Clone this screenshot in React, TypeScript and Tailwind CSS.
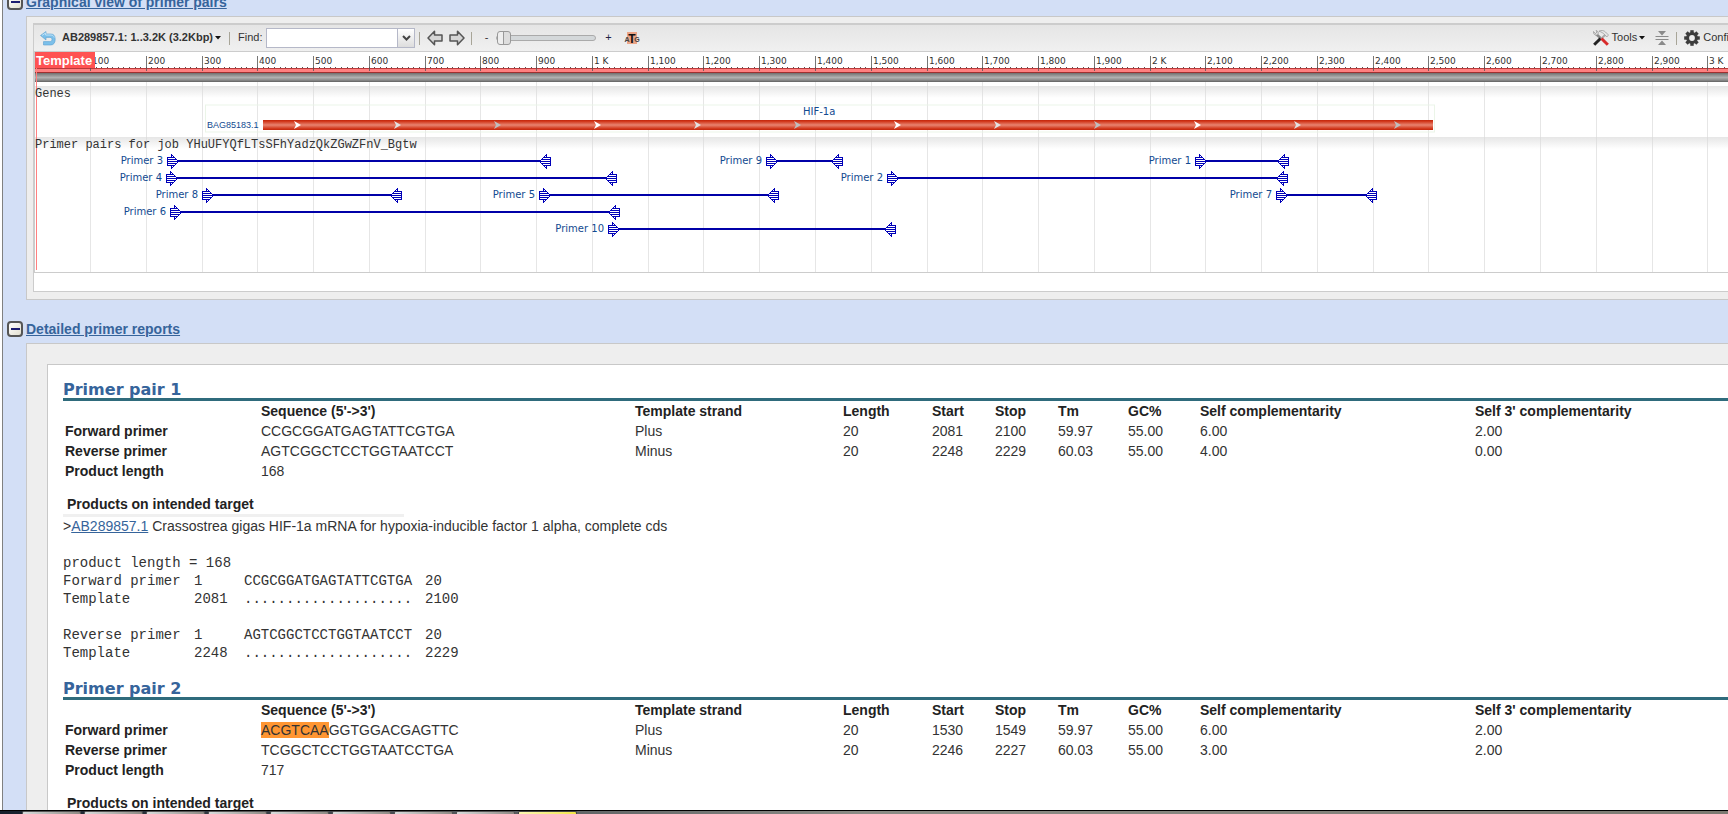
import type { ReactNode } from 'react';

const CHART_WIDTH = 1800;
const STEP = 55.77;
const at = (base: number) => Math.floor((base * STEP) / 100 - 0.3) + 0.5;

const tickLabel = (base: number) =>
  base % 1000 === 0 ? `${base / 1000} K` : base > 1000 ? `${Math.floor(base / 1000)},${String(base % 1000).padStart(3, '0')}` : String(base);

const ticks = Array.from({ length: 31 }, (_, i) => (i + 1) * 100);
const minorTicks = Array.from({ length: 310 }, (_, i) => (i + 1) * 10);

const primerSpans = [
  { name: 'Primer 3', from: 132, to: 516, row: 0 },
  { name: 'Primer 9', from: 731, to: 808, row: 0 },
  { name: 'Primer 1', from: 1160, to: 1254, row: 0 },
  { name: 'Primer 4', from: 131, to: 582, row: 1 },
  { name: 'Primer 2', from: 852, to: 1253, row: 1 },
  { name: 'Primer 8', from: 167, to: 367, row: 2 },
  { name: 'Primer 5', from: 504, to: 744, row: 2 },
  { name: 'Primer 7', from: 1241, to: 1342, row: 2 },
  { name: 'Primer 6', from: 135, to: 585, row: 3 },
  { name: 'Primer 10', from: 573, to: 861, row: 4 },
];

const geneArrowColors = ['#ffffff', '#e2e2e2', '#bfbfbf'];

function PrimerHead({ x, y, dir }: { x: number; y: number; dir: 1 | -1 }) {
  return (
    <g transform={`translate(${x} ${y}) scale(${dir} 1)`} stroke="#0000b8" fill="none" shapeRendering="crispEdges">
      <path d="M0.5 -4H4.5V-7L11.5 0L4.5 7V4H0.5Z" fill="#fff" />
      <path d="M0.5 -2H9M0.5 0H11M0.5 2H9M4.5 -4H7M4.5 4H7" />
    </g>
  );
}

function TrackChart() {
  return (
    <svg width={CHART_WIDTH} height={220} className="block shrink-0" role="img" aria-label="Primer pairs on template">
      <defs>
        <linearGradient id="track" x1="0" y1="0" x2="0" y2="1">
          <stop offset="0" stopColor="#e6e6e6" />
          <stop offset="1" stopColor="#ffffff" />
        </linearGradient>
        <linearGradient id="bar" x1="0" y1="0" x2="0" y2="1">
          <stop offset="0" stopColor="#6e6e6e" />
          <stop offset="0.2" stopColor="#8c8c8c" />
          <stop offset="0.5" stopColor="#b0b0b0" />
          <stop offset="0.8" stopColor="#8a8a8a" />
          <stop offset="1" stopColor="#606060" />
        </linearGradient>
        <linearGradient id="gene" x1="0" y1="0" x2="0" y2="1">
          <stop offset="0" stopColor="#c22408" />
          <stop offset="0.15" stopColor="#d23a1e" />
          <stop offset="0.5" stopColor="#e88470" />
          <stop offset="0.85" stopColor="#d23a1e" />
          <stop offset="1" stopColor="#c22408" />
        </linearGradient>
      </defs>
      <rect width={CHART_WIDTH} height={220} fill="#fff" />
      <rect y={34} width={CHART_WIDTH} height={12} fill="url(#track)" />
      <rect y={85} width={CHART_WIDTH} height={12} fill="url(#track)" />
      {ticks.map((t) => (
        <path key={t} d={`M${at(t)} 30V220`} stroke="#d8d8d8" strokeOpacity={0.65} />
      ))}

      {minorTicks.map((t) => (
        <rect key={t} x={at(t) - 0.5} y={15} width={1} height={1} fill="#555" />
      ))}
      <g fontFamily='"DejaVu Sans", sans-serif' fontSize={9} fill="#333">
        {ticks.map((t) => (
          <text key={t} x={at(t) + 1.5} y={12}>
            {tickLabel(t)}
          </text>
        ))}
      </g>
      <rect y={16} width={CHART_WIDTH} height={5} fill="#ff8080" />
      <rect y={16} width={CHART_WIDTH} height={1} fill="#b83a3a" />
      <rect y={20} width={CHART_WIDTH} height={1} fill="#a03030" />
      {ticks.map((t) => (
        <path key={t} d={`M${at(t)} 4V19`} stroke="#555" strokeOpacity={0.8} />
      ))}
      <rect y={21} width={CHART_WIDTH} height={9} fill="url(#bar)" />

      <rect width={60} height={16} fill="#ff5252" />
      <text x={1} y={13} fontFamily='"Liberation Sans", sans-serif' fontSize={13} fontWeight="bold" fill="#fff">
        Template
      </text>
      <path d="M1.5 16V218" stroke="#ff8080" />

      <g fontFamily='"Liberation Mono", monospace' fontSize={12} fill="#333">
        <text x={0} y={45}>Genes</text>
        <text x={0} y={96}>Primer pairs for job YHuUFYQfLTsSFhYadzQkZGwZFnV_Bgtw</text>
      </g>

      <rect x={170.5} y={53} width={1229} height={27} fill="none" stroke="#e9f4e6" strokeOpacity={0.9} />
      <text x={172} y={76} fontFamily='"Liberation Sans", sans-serif' fontSize={9} fill="#124a90">BAG85183.1</text>
      <text x={768} y={63} fontFamily='"DejaVu Sans", sans-serif' fontSize={10} fill="#124a90">HIF-1a</text>
      <rect x={228} y={68} width={1170} height={10} fill="url(#gene)" />
      {Array.from({ length: 12 }, (_, i) => (
        <path key={i} d="M0 69L7 73L0 77L2 73Z" transform={`translate(${259 + i * 100} 0)`} fill={geneArrowColors[i % 3]} />
      ))}

      {primerSpans.map(({ name, from, to, row }) => {
        const y = 108 + row * 17;
        return (
          <g key={name}>
            <text x={from - 4} y={y + 4} textAnchor="end" fontFamily='"DejaVu Sans", sans-serif' fontSize={10} fill="#124a90">
              {name}
            </text>
            <rect x={from + 11} y={y} width={to - from - 22} height={2} fill="#0000a8" />
            <PrimerHead x={from} y={y + 1.5} dir={1} />
            <PrimerHead x={to} y={y + 1.5} dir={-1} />
          </g>
        );
      })}
    </svg>
  );
}

const Separator = () => <span className="h-[13px] w-px shrink-0 bg-[#a8a598]" />;

const Caret = () => (
  <svg width="6" height="4" viewBox="0 0 6 4" aria-hidden="true">
    <path d="M0 0H6L3 3.5Z" fill="#111" />
  </svg>
);

const ArrowIcon = ({ flip = false }: { flip?: boolean }) => (
  <svg width="16" height="16" viewBox="0 0 16 16" className={flip ? 'rotate-180' : ''} aria-hidden="true">
    <path d="M1 8L7.5 1.2V5H15V11H7.5V14.8Z" fill="#d6d6d6" stroke="#555" strokeWidth="1.5" strokeLinejoin="round" />
  </svg>
);

const UndoIcon = () => (
  <svg width="16" height="15" viewBox="0 0 16 15" aria-hidden="true">
    <path d="M0.5 4.5L6 0.5V3H11C13.5 3 15.2 4.8 15.2 8.2C15.2 12 13.5 14 10.5 14H3.5V10.6H9.8C11.2 10.6 12 9.8 12 8.5C12 7.2 11.3 6.4 9.8 6.4H6V9Z" fill="#7cc0ea" stroke="#5b9fd0" strokeWidth="0.6" />
    <path d="M2 4.5L5.6 2V4H11C12.6 4 13.8 5 14.2 6.5" fill="none" stroke="#bfe2f7" />
  </svg>
);

const ToolsIcon = () => (
  <svg width="16" height="16" viewBox="0 0 16 16" aria-hidden="true">
    <path d="M2.5 3.5L8.5 9" stroke="#888" strokeWidth="2.4" />
    <path d="M0.5 1.5L2.5 3.5L4 2L3 0.5C5 0.8 5.8 2.5 5 4.5C3.5 5.8 1 5 0.5 3Z" fill="#ddd" stroke="#888" strokeWidth="0.6" />
    <path d="M13 4L8 9" stroke="#aaa" strokeWidth="2" />
    <path d="M6 1.2C8.5 -0.2 11 0.5 12.5 2L15.5 5L13.8 7L11.5 4.5C10 3 8.5 2 6 1.2Z" fill="#e4e4e4" stroke="#888" strokeWidth="0.6" />
    <path d="M7.5 8.5L1.2 14.8" stroke="#222" strokeWidth="3" />
    <path d="M8.5 8.5L14.8 14.8" stroke="#d82a2a" strokeWidth="3" />
  </svg>
);

const CollapseIcon = () => (
  <svg width="14" height="14" viewBox="0 0 14 14" aria-hidden="true">
    <path d="M3 0H11L7 4.5Z M3 14H11L7 9.5Z" fill="#8a8a8a" />
    <path d="M0.5 5.5H13.5M0.5 8.5H13.5" stroke="#8a8a8a" />
  </svg>
);

const GearIcon = () => (
  <svg width="16" height="16" viewBox="-8 -8 16 16" aria-hidden="true">
    {[0, 45, 90, 135].map((a) => (
      <rect key={a} x="-1.7" y="-7.8" width="3.4" height="15.6" fill="#3c3c3c" transform={`rotate(${a})`} />
    ))}
    <circle r="5.9" fill="#3c3c3c" />
    <circle r="2.9" fill="#eee" />
  </svg>
);

const AtgIcon = () => (
  <svg width="16" height="14" viewBox="0 0 16 14" aria-hidden="true">
    <rect x="3" y="1" width="10" height="12" fill="#eca486" />
    <g fontFamily='"Liberation Sans", sans-serif' fontWeight="bold" textAnchor="middle" fill="#111">
      <text x="3" y="10.5" fontSize="7" fill="#444">A</text>
      <text x="8" y="11.5" fontSize="12">T</text>
      <text x="13" y="10.5" fontSize="7" fill="#444">G</text>
    </g>
  </svg>
);

function Toolbar() {
  return (
    <div className="flex h-[27px] items-center border-b border-[#ccc] bg-linear-to-b from-[#e5e5e5] to-[#f0f0f0] pr-[41px] pl-1.5 text-[11px] text-[#333]">
      <button aria-label="Go back"><UndoIcon /></button>
      <button className="ml-1.5 flex items-center gap-0.5 font-bold whitespace-nowrap">
        AB289857.1: 1..3.2K (3.2Kbp) <Caret />
      </button>
      <span className="ml-2 flex"><Separator /></span>
      <label htmlFor="find" className="ml-2">Find:</label>
      <input id="find" className="ml-1 h-5 w-[132px] border border-[#b5b8c8] bg-white px-1 outline-none" />
      <button aria-label="Show matches" className="flex h-5 w-[17px] items-center justify-center border border-l-0 border-[#b5b8c8] bg-linear-to-b from-white to-[#ddd]">
        <svg width="9" height="6" viewBox="0 0 9 6" aria-hidden="true">
          <path d="M1 1L4.5 4.5L8 1" fill="none" stroke="#444" strokeWidth="2" />
        </svg>
      </button>
      <span className="ml-1 flex"><Separator /></span>
      <button aria-label="Previous" className="ml-[7px]"><ArrowIcon /></button>
      <button aria-label="Next" className="ml-1.5"><ArrowIcon flip /></button>
      <span className="ml-1.5 flex"><Separator /></span>
      <button aria-label="Zoom out" className="ml-1.5 w-4">-</button>
      <input
        type="range"
        aria-label="Zoom"
        defaultValue={0}
        className="ml-0.5 h-4 w-[100px] appearance-none bg-transparent [&::-webkit-slider-runnable-track]:h-[6px] [&::-webkit-slider-runnable-track]:rounded-full [&::-webkit-slider-runnable-track]:border [&::-webkit-slider-runnable-track]:border-[#aaa] [&::-webkit-slider-runnable-track]:bg-[#d4d8da] [&::-webkit-slider-thumb]:-mt-[5px] [&::-webkit-slider-thumb]:h-[14px] [&::-webkit-slider-thumb]:w-[14px] [&::-webkit-slider-thumb]:appearance-none [&::-webkit-slider-thumb]:rounded-[3px] [&::-webkit-slider-thumb]:border [&::-webkit-slider-thumb]:border-[#999] [&::-webkit-slider-thumb]:bg-[linear-gradient(90deg,#eee_5px,#999_5px,#999_6px,#ddd_6px)]"
      />
      <button aria-label="Zoom in" className="ml-1 w-4 text-[#224]">+</button>
      <button aria-label="Zoom to sequence" className="ml-2"><AtgIcon /></button>
      <div className="ml-auto flex items-center">
        <button className="flex items-center">
          <ToolsIcon />
          <span className="mr-0.5 ml-[3px]">Tools</span>
          <Caret />
        </button>
        <button aria-label="Collapse tracks" className="ml-2.5"><CollapseIcon /></button>
        <span className="ml-[7px] flex"><Separator /></span>
        <button className="ml-[7px] flex items-center gap-[3px]">
          <GearIcon />
          Configure
        </button>
      </div>
    </div>
  );
}

function SectionHeading({ children }: { children: ReactNode }) {
  return (
    <div className="flex h-[22px] items-center gap-[3px] pb-1.5 pl-1">
      <button aria-label="Collapse section" className="flex h-4 w-4 shrink-0 items-center justify-center rounded-[4px] border-2 border-[#555] bg-linear-to-br from-white to-[#e2dfd0]">
        <span className="h-[2px] w-[9px] bg-[#1c1c70]" />
      </button>
      <h2 className="font-bold text-[#36649b]">
        <a href="#section" className="underline">{children}</a>
      </h2>
    </div>
  );
}

interface Pair {
  id: number;
  forward: string[];
  reverse: string[];
  highlight?: number;
  product: string;
}

const pairs: Pair[] = [
  {
    id: 1,
    forward: ['CCGCGGATGAGTATTCGTGA', 'Plus', '20', '2081', '2100', '59.97', '55.00', '6.00', '2.00'],
    reverse: ['AGTCGGCTCCTGGTAATCCT', 'Minus', '20', '2248', '2229', '60.03', '55.00', '4.00', '0.00'],
    product: '168',
  },
  {
    id: 2,
    forward: ['ACGTCAAGGTGGACGAGTTC', 'Plus', '20', '1530', '1549', '59.97', '55.00', '6.00', '2.00'],
    reverse: ['TCGGCTCCTGGTAATCCTGA', 'Minus', '20', '2246', '2227', '60.03', '55.00', '3.00', '2.00'],
    highlight: 7,
    product: '717',
  },
];

const columns = ["Sequence (5'->3')", 'Template strand', 'Length', 'Start', 'Stop', 'Tm', 'GC%', 'Self complementarity', "Self 3' complementarity"];

function Alignment({ label, row }: { label: string; row: string[] }) {
  return (
    <>
      <span>{label}</span>
      <span>1</span>
      <span>{row[0]}</span>
      <span>{row[2]}</span>
      <span>Template</span>
      <span>{row[3]}</span>
      <span>{'.'.repeat(row[0].length)}</span>
      <span>{row[4]}</span>
    </>
  );
}

function PairReport({ pair }: { pair: Pair }) {
  const mark = pair.highlight ?? 0;
  return (
    <article className="mb-3">
      <h3 className="flex h-[26px] items-end border-b-3 border-[#2f6b7c] font-['DejaVu_Sans',sans-serif] text-base leading-4 font-bold text-[#36649b]">
        Primer pair {pair.id}
      </h3>
      <table className="w-full table-fixed text-left leading-5">
        <colgroup>
          <col className="w-[198px]" />
          <col className="w-[374px]" />
          <col className="w-[208px]" />
          <col className="w-[89px]" />
          <col className="w-[63px]" />
          <col className="w-[63px]" />
          <col className="w-[70px]" />
          <col className="w-[72px]" />
          <col className="w-[275px]" />
          <col />
        </colgroup>
        <thead>
          <tr>
            <td />
            {columns.map((c) => <th key={c} className="text-[#222]">{c}</th>)}
          </tr>
        </thead>
        <tbody>
          <tr>
            <th className="pl-0.5 text-[#222]">Forward primer</th>
            {pair.forward.map((v, i) => (
              <td key={i}>
                {i === 0 && mark > 0 ? <><mark className="bg-[#ff9632] text-inherit">{v.slice(0, mark)}</mark>{v.slice(mark)}</> : v}
              </td>
            ))}
          </tr>
          <tr>
            <th className="pl-0.5 text-[#222]">Reverse primer</th>
            {pair.reverse.map((v, i) => <td key={i}>{v}</td>)}
          </tr>
          <tr>
            <th className="pl-0.5 text-[#222]">Product length</th>
            <td>{pair.product}</td>
          </tr>
        </tbody>
      </table>
      <h4 className="mt-[13px] w-[341px] border-b-3 border-[#f0f0f0] pl-1 leading-5 font-bold text-[#222]">Products on intended target</h4>
      <p className="leading-[18px]">
        &gt;<a href="#AB289857.1" className="text-[#36649b] underline">AB289857.1</a> Crassostrea gigas HIF-1a mRNA for hypoxia-inducible factor 1 alpha, complete cds
      </p>
      <div className="mt-[19px] font-['Liberation_Mono',monospace] leading-[18px]">
        <p>product length = {pair.product}</p>
        <div className="grid grid-cols-[131px_50px_181px_auto]">
          <Alignment label="Forward primer" row={pair.forward} />
        </div>
        <div className="mt-[18px] grid grid-cols-[131px_50px_181px_auto]">
          <Alignment label="Reverse primer" row={pair.reverse} />
        </div>
      </div>
    </article>
  );
}

function Taskbar() {
  return (
    <footer className="flex h-1 shrink-0 gap-[3px] border-t border-black bg-linear-to-r from-[#16202c] via-[#8c8c86] to-[#7d7a72] pl-[22px]">
      {Array.from({ length: 8 }, (_, i) => (
        <span key={i} className="w-[59px] rounded-t-[2px] border border-b-0 border-[#555] bg-linear-to-r from-[#d8dcdc] to-[#8e8a84]" />
      ))}
      <span className="w-[59px] rounded-t-[2px] border border-b-0 border-[#444] bg-linear-to-r from-[#fbf7b0] to-[#f2e640]" />
    </footer>
  );
}

export default function App() {
  return (
    <div className="flex h-screen flex-col overflow-hidden bg-white font-['Liberation_Sans',Arial,sans-serif] text-sm text-[#333]">
      <main className="ml-0.5 min-h-0 flex-1 overflow-hidden border-l border-[#808080] bg-[#d3dff6]">
        <div className="w-[calc(100%+72px)]">
          <section className="-mt-1.5">
            <SectionHeading>Graphical view of primer pairs</SectionHeading>
            <div className="ml-[23px] border border-[#c8c8c8] bg-[#eee] p-1.5 pb-[7px]">
              <div className="border border-t-2 border-[#ccc] bg-white pb-[18px]">
                <Toolbar />
                <div className="overflow-hidden border-b border-l border-[#ccc]">
                  <TrackChart />
                </div>
              </div>
            </div>
          </section>
          <section className="mt-[21px]">
            <SectionHeading>Detailed primer reports</SectionHeading>
            <div className="ml-[23px] border border-[#c8c8c8] bg-[#eee] p-5">
              <div className="border border-[#c8c8c8] bg-white pt-2.5 pl-[15px]">
                {pairs.map((p) => <PairReport key={p.id} pair={p} />)}
              </div>
            </div>
          </section>
        </div>
      </main>
      <Taskbar />
    </div>
  );
}
